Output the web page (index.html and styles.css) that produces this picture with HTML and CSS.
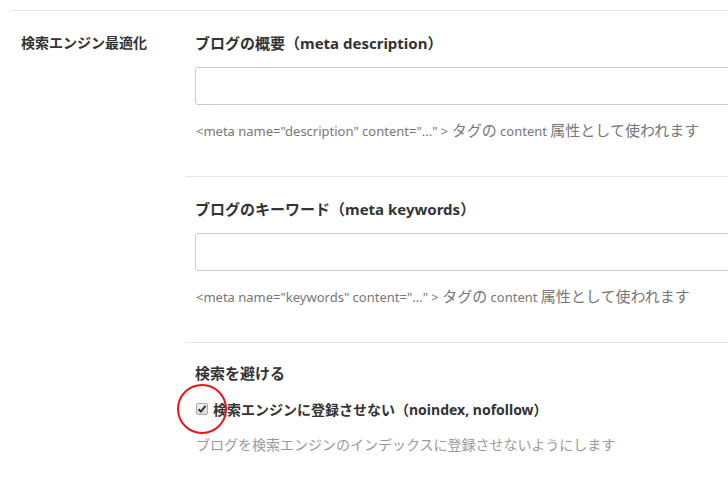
FILE: index.html
```html
<!DOCTYPE html>
<html lang="ja">
<head>
<meta charset="utf-8">
<link rel="stylesheet" href="styles.css">
</head>
<body>
<div class="settings">
  <div class="row-label">検索エンジン最適化</div>
  <div class="row-body">
    <section class="field">
      <h3 class="field-title">ブログの概要（meta description）</h3>
      <input class="text-input" type="text">
      <p class="help">&lt;meta name="description" content="..." &gt; <span class="ja">タグの</span> content <span class="ja">属性として使われます</span></p>
    </section>
    <section class="field">
      <h3 class="field-title">ブログのキーワード（meta keywords）</h3>
      <input class="text-input" type="text">
      <p class="help">&lt;meta name="keywords" content="..." &gt; <span class="ja">タグの</span> content <span class="ja">属性として使われます</span></p>
    </section>
    <section class="field field-last">
      <h3 class="field-title">検索を避ける</h3>
      <label class="check-row">
        <span class="checkbox">
          <svg width="10" height="10" viewBox="0 0 10 10"><path d="M1.6 5.2 L3.9 7.6 L8.6 1.8" fill="none" stroke="#333" stroke-width="2"/></svg>
          <span class="annot"></span>
        </span>
        <span class="check-text">検索エンジンに登録させない（noindex, nofollow）</span>
      </label>
      <p class="help help-light">ブログを検索エンジンのインデックスに登録させないようにします</p>
    </section>
  </div>
</div>
</body>
</html>
```
FILE: styles.css
```css
html, body {
  margin: 0;
  padding: 0;
  background: #fff;
  overflow: hidden;
}
body {
  font-family: "Noto Sans", "Noto Sans CJK JP", sans-serif;
  color: #333;
  width: 728px;
  height: 480px;
}
.settings {
  margin: 10px 0 0 11px;
  border-top: 1px solid #e1e6e9;
  display: grid;
  grid-template-columns: 174px 1fr;
}
.row-label {
  padding: 21px 0 0 10px;
  font-size: 14px;
  line-height: 22px;
  font-weight: bold;
  color: #333;
}
.field {
  padding: 21px 0 35px 10px;
  border-top: 1px solid #e3e8ec;
}
.field:first-child {
  border-top: none;
}
.field-last {
  padding-top: 19px;
}
.field-title {
  margin: 0;
  font-size: 15px;
  line-height: 22px;
  font-weight: bold;
  color: #333;
}
.text-input {
  display: block;
  box-sizing: border-box;
  margin: 13px 0 0 0;
  width: calc(100% + 20px);
  height: 38px;
  border: 1px solid #c6ced4;
  border-radius: 3px;
  background: #fff;
  padding: 0 8px;
}
.help {
  margin: 16px 0 0 1px;
  height: 20px;
  font-size: 13px;
  line-height: 20px;
  color: #777;
  white-space: nowrap;
}
.help .ja {
  font-size: 15px;
  line-height: 1;
}
.help-light {
  margin-top: 15px;
  font-size: 14px;
  color: #9a9a9a;
}
.check-row {
  margin-top: 14px;
  display: flex;
  align-items: center;
  height: 22px;
}
.checkbox {
  position: relative;
  box-sizing: border-box;
  width: 12px;
  height: 12px;
  margin: 0 5px 0 1px;
  border: 1px solid #a7a7a7;
  border-radius: 2px;
  background: linear-gradient(#f2f2f2, #dcdcdc);
  display: flex;
  align-items: center;
  justify-content: center;
}
.annot {
  position: absolute;
  left: -20px;
  top: -20px;
  width: 46px;
  height: 46px;
  border: 2px solid #e8161b;
  border-radius: 50%;
}
.check-text {
  font-size: 14px;
  font-weight: bold;
  color: #333;
}
```
